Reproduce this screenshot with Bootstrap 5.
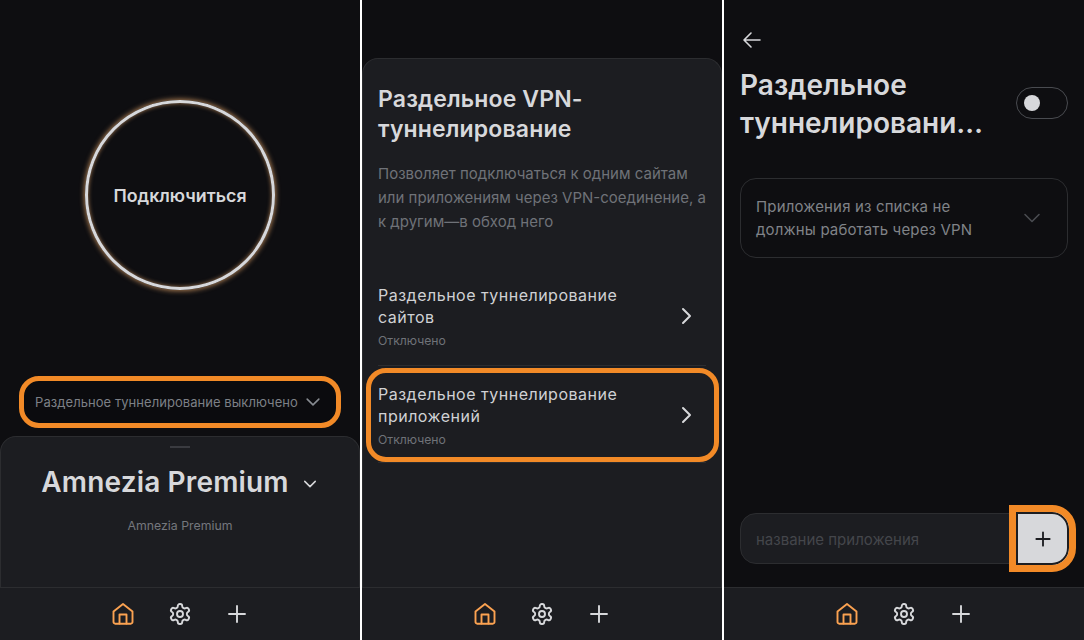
<!DOCTYPE html>
<html lang="ru">
<head>
  <meta charset="UTF-8">
  <meta name="viewport" content="width=device-width, initial-scale=1.0">
  <title>Amnezia VPN</title>
  <link href="https://cdn.jsdelivr.net/npm/bootstrap@5.3.0/dist/css/bootstrap.min.css" rel="stylesheet">
  <style>
    html, body { height: 100%; }
    body { background: #fff; font-family: Inter, "Noto Sans", sans-serif; overflow: hidden; color: #d7d8db; }
    .screens { height: 640px; gap: 2px; }
    .screen { width: 360px; flex: none; background: #0e0e11; }
    .screen-main { flex: 1 1 0; min-height: 0; }
    .bottom-nav { height: 53px; flex: none; background: #1c1d21; border-top: 1px solid #2c2d30; gap: 33px; }
    .bottom-nav svg { width: 24px; height: 24px; fill: none; stroke: #d7d8db; stroke-width: 1.9; stroke-linecap: round; stroke-linejoin: round; }
    .bottom-nav svg.nav-on { stroke: #fba251; }
    .connect-ring { width: 190px; height: 190px; margin: 100px auto 0; padding: 2px 0 0; border: 3px solid #d7d8db; box-shadow: 0 0 5px 1px #a77a50, inset 0 0 4px #a77a50; font-size: 17.800px; font-weight: 600; background: transparent; color: #d7d8db; }
    .split-pill { width: 322px; height: 52px; margin: 86px auto 0; border: 5px solid #f28a27; border-radius: 20px; background: #0b0b0e; font-size: 13px; color: #7d8086; gap: 5px; padding: 0 2px 0 0; letter-spacing: .05px; }
    .split-pill span { padding-top: 2px; }
    .split-pill svg { fill: none; stroke: #878b91; stroke-width: 1.9; stroke-linecap: round; stroke-linejoin: round; }
    .sheet { background: #1c1d21; border: 1px solid #2c2d30; border-bottom: 0; border-radius: 16px 16px 0 0; }
    .home-sheet { margin-top: 8px; flex: 1 1 0; }
    .drag-bar { width: 20px; height: 2px; background: #3a3b40; margin: 9px auto 0; }
    .plan-title { font-size: 28px; font-weight: 600; line-height: 36px; margin: 16px 0 0; gap: 12px; letter-spacing: .15px; }
    .plan-title svg { fill: none; stroke: #d7d8db; stroke-width: 2; stroke-linecap: round; stroke-linejoin: round; margin-top: 3px; }
    .plan-sub { font-size: 12.300px; color: #74777d; margin-top: 18px; line-height: 16px; }
    .split-sheet { margin-top: 58px; flex: 1 1 0; padding: 25px 0 0; }
    .sheet-head { padding: 0 15px; }
    .sheet-title { font-size: 23px; font-weight: 600; line-height: 30px; margin: 0 0 18px; letter-spacing: .15px; }
    .sheet-text { font-size: 15px; line-height: 24px; color: #6f7278; margin: 0 0 35px; }
    .route-row { margin: 0 15px; height: 97px; padding-bottom: 2px; border-bottom: 1px solid #2c2d30; }
    .route-row.route-on { margin: 2px 2px 0 3px; padding: 1px 13px 1px 7px; height: 94px; border: 5px solid #f28a27; border-radius: 20px; }
    .route-end { margin: 0 15px; height: 1px; background: #2c2d30; }
    .route-name { font-size: 16px; line-height: 22px; color: #d0d1d4; letter-spacing: .5px; }
    .route-state { font-size: 12.200px; line-height: 16px; color: #6f7278; margin-top: 5px; }
    .route-row svg { fill: none; stroke: #d7d8db; stroke-width: 2; stroke-linecap: round; stroke-linejoin: round; margin: 0 8px 0 0; }
    .route-row.route-on svg { margin: 0 3px 0 0; }
    .back-arrow { margin: 28px 0 0 16px; display: block; fill: none; stroke: #d7d8db; stroke-width: 1.6; stroke-linecap: round; stroke-linejoin: round; }
    .page-head { padding: 0 16px; margin-top: 14px; }
    .page-title { font-size: 28px; font-weight: 600; line-height: 38px; margin: 0; width: 262px; }
    .toggle-box { width: 52px; height: 32px; border: 1px solid #494b50; border-radius: 16px; padding-left: 7px; margin-bottom: 2px; }
    .toggle-dot { width: 16px; height: 16px; border-radius: 50%; background: #d7d8db; }
    .mode-box { margin: 36px 16px 0; height: 80px; border: 1px solid #2c2d30; border-radius: 16px; padding: 0 23px 0 15px; font-size: 15px; line-height: 23px; color: #808388; letter-spacing: .15px; }
    .mode-box svg { fill: none; stroke: #494b50; stroke-width: 1.6; stroke-linecap: round; stroke-linejoin: round; }
    .add-row { margin-top: auto; padding: 0 8px 15px 16px; }
    .add-input { flex: 1 1 0; height: 51px; margin-right: -9px; background: #1c1d21; border: 1px solid #2c2d30; border-radius: 16px 0 0 16px; padding: 3px 15px 0; font-size: 15px; color: #44464b; }
    .add-btn { width: 67px; height: 67px; padding: 0; background: #d7d8db; border: 7px solid #f28a27; border-radius: 0 24px 24px 0; box-shadow: inset 0 0 0 2px #1c1d21; position: relative; }
    .add-btn svg { fill: none; stroke: #1c1d21; stroke-width: 2.200; stroke-linecap: round; }
  </style>
</head>
<body>
<svg width="0" height="0" class="position-absolute">
  <defs>
    <symbol id="i-home" viewBox="0 0 24 24">
      <path d="M12 2 21.5 9.6V20a1.7 1.7 0 0 1-1.7 1.7H4.2A1.7 1.7 0 0 1 2.500 20V9.600Z"/>
      <path d="M8.500 21.500V12.500H15.500V21.500"/>
    </symbol>
    <symbol id="i-gear" viewBox="0 0 24 24">
      <path d="M12.22 2h-.44a2 2 0 0 0-2 2v.18a2 2 0 0 1-1 1.73l-.43.25a2 2 0 0 1-2 0l-.15-.08a2 2 0 0 0-2.730.73l-.22.38a2 2 0 0 0 .73 2.730l.15.1a2 2 0 0 1 1 1.720v.51a2 2 0 0 1-1 1.740l-.15.09a2 2 0 0 0-.73 2.730l.22.38a2 2 0 0 0 2.730.73l.15-.08a2 2 0 0 1 2 0l.43.25a2 2 0 0 1 1 1.730V20a2 2 0 0 0 2 2h.44a2 2 0 0 0 2-2v-.18a2 2 0 0 1 1-1.730l.43-.25a2 2 0 0 1 2 0l.15.08a2 2 0 0 0 2.730-.73l.22-.39a2 2 0 0 0-.73-2.730l-.15-.08a2 2 0 0 1-1-1.740v-.5a2 2 0 0 1 1-1.740l.15-.09a2 2 0 0 0 .73-2.730l-.22-.38a2 2 0 0 0-2.730-.73l-.15.08a2 2 0 0 1-2 0l-.43-.25a2 2 0 0 1-1-1.730V4a2 2 0 0 0-2-2z"/>
      <circle cx="12" cy="12" r="3"/>
    </symbol>
    <symbol id="i-plus" viewBox="0 0 24 24">
      <path d="M12 4V20M4 12H20"/>
    </symbol>
    <symbol id="i-down" viewBox="0 0 24 24">
      <path d="M5 8.500 12 15.500 19 8.500"/>
    </symbol>
    <symbol id="i-right" viewBox="0 0 24 24">
      <path d="M9 5 16 12 9 19"/>
    </symbol>
  </defs>
</svg>

<div class="screens d-flex">

  <section class="screen d-flex flex-column">
    <div class="screen-main d-flex flex-column">
      <button class="connect-ring rounded-circle d-flex align-items-center justify-content-center">Подключиться</button>
      <button class="split-pill d-flex align-items-center justify-content-center">
        <span>Раздельное туннелирование выключено</span>
        <svg width="20" height="20"><use href="#i-down"/></svg>
      </button>
      <div class="sheet home-sheet text-center">
        <div class="drag-bar"></div>
        <h2 class="plan-title d-flex align-items-center justify-content-center">
          <span>Amnezia Premium</span>
          <svg width="18" height="18"><use href="#i-down"/></svg>
        </h2>
        <div class="plan-sub">Amnezia Premium</div>
      </div>
    </div>
    <nav class="bottom-nav d-flex align-items-center justify-content-center">
      <svg class="nav-on"><use href="#i-home"/></svg>
      <svg><use href="#i-gear"/></svg>
      <svg><use href="#i-plus"/></svg>
    </nav>
  </section>

  <section class="screen d-flex flex-column">
    <div class="screen-main d-flex flex-column">
      <div class="sheet split-sheet">
        <div class="sheet-head">
          <h2 class="sheet-title">Раздельное VPN-<br>туннелирование</h2>
          <p class="sheet-text">Позволяет подключаться к одним сайтам или приложениям через VPN-соединение, а к другим—в обход него</p>
        </div>
        <div class="route-row d-flex align-items-center justify-content-between">
          <div>
            <div class="route-name">Раздельное туннелирование<br>сайтов</div>
            <div class="route-state">Отключено</div>
          </div>
          <svg width="24" height="24"><use href="#i-right"/></svg>
        </div>
        <div class="route-row route-on d-flex align-items-center justify-content-between">
          <div>
            <div class="route-name">Раздельное туннелирование<br>приложений</div>
            <div class="route-state">Отключено</div>
          </div>
          <svg width="24" height="24"><use href="#i-right"/></svg>
        </div>
        <div class="route-end"></div>
      </div>
    </div>
    <nav class="bottom-nav d-flex align-items-center justify-content-center">
      <svg class="nav-on"><use href="#i-home"/></svg>
      <svg><use href="#i-gear"/></svg>
      <svg><use href="#i-plus"/></svg>
    </nav>
  </section>

  <section class="screen d-flex flex-column">
    <div class="screen-main d-flex flex-column">
      <svg class="back-arrow" width="24" height="24" viewBox="0 0 24 24"><path d="M20 12H4.500M11 5 4 12 11 19"/></svg>
      <div class="page-head d-flex justify-content-between align-items-center">
        <h1 class="page-title">Раздельное туннелировани…</h1>
        <div class="toggle-box d-flex align-items-center"><span class="toggle-dot"></span></div>
      </div>
      <div class="mode-box d-flex align-items-center justify-content-between">
        <div>Приложения из списка не<br>должны работать через VPN</div>
        <svg width="24" height="24"><use href="#i-down"/></svg>
      </div>
      <div class="add-row d-flex align-items-center">
        <div class="add-input d-flex align-items-center">название приложения</div>
        <button class="add-btn d-flex align-items-center justify-content-center">
          <svg width="20" height="20"><use href="#i-plus"/></svg>
        </button>
      </div>
    </div>
    <nav class="bottom-nav d-flex align-items-center justify-content-center">
      <svg class="nav-on"><use href="#i-home"/></svg>
      <svg><use href="#i-gear"/></svg>
      <svg><use href="#i-plus"/></svg>
    </nav>
  </section>

</div>
<script src="https://cdn.jsdelivr.net/npm/bootstrap@5.3.0/dist/js/bootstrap.bundle.min.js"></script>
</body>
</html>
